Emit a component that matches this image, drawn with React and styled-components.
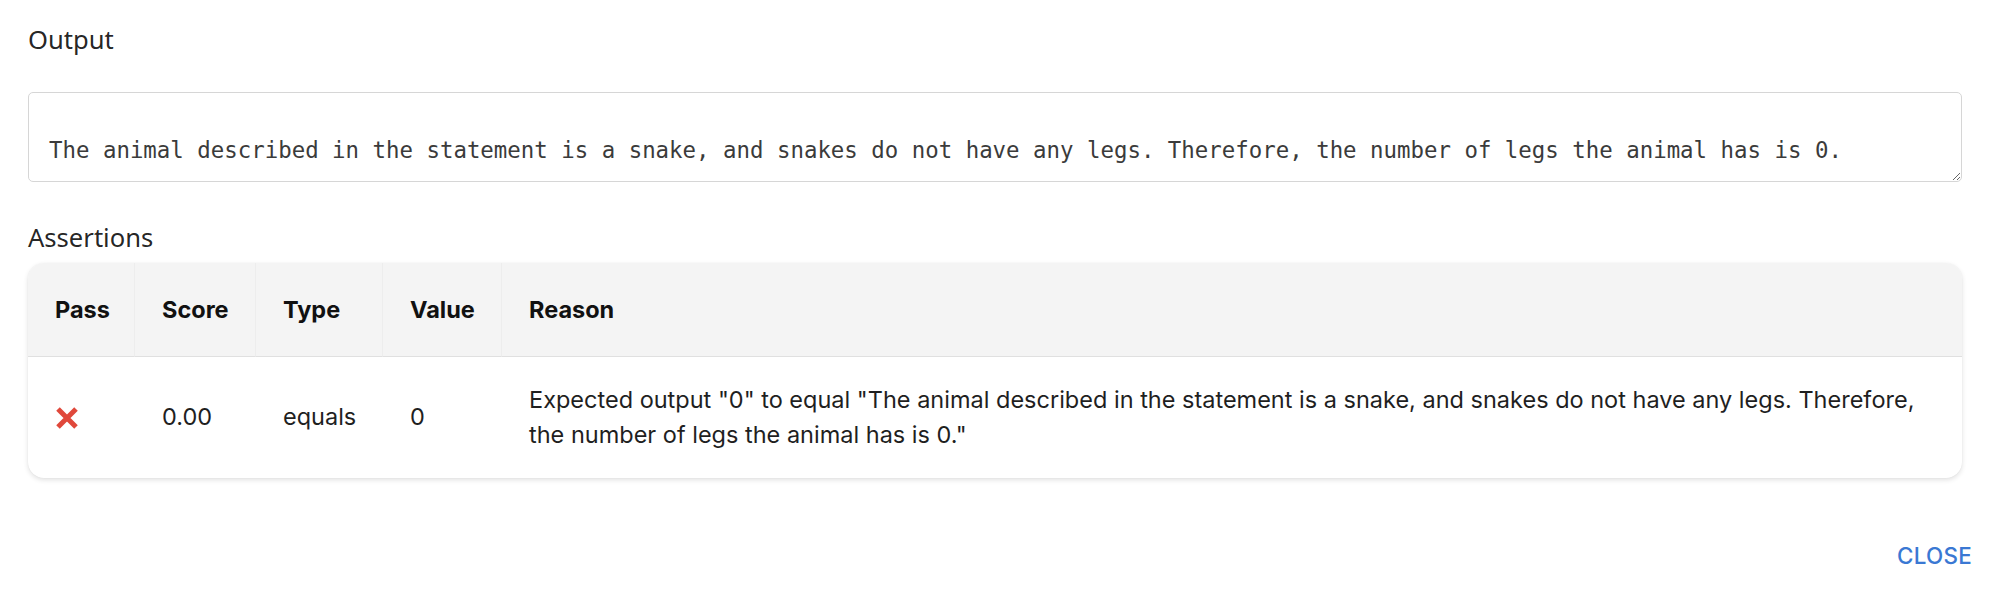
import React from "react";
import styled, { createGlobalStyle } from "styled-components";

const GlobalStyle = createGlobalStyle`
  html, body {
    margin: 0;
    background: #ffffff;
  }
  body {
    font-family: Inter, "Liberation Sans", sans-serif;
  }
`;

const outputText =
  "The animal described in the statement is a snake, and snakes do not have any legs. Therefore, the number of legs the animal has is 0.";

const columns = ["Pass", "Score", "Type", "Value", "Reason"];

const rows = [
  {
    pass: false,
    score: "0.00",
    type: "equals",
    value: "0",
    reason: `Expected output "0" to equal "${outputText}"`,
  },
];

const FailIcon = () => (
  <svg width="24" height="24" viewBox="0 0 24 24">
    <path d="M3 3 L21 21 M21 3 L3 21" stroke="#e0483b" strokeWidth="5" fill="none" />
  </svg>
);

const App = () => {
  return (
    <Page>
      <GlobalStyle />
      <SectionLabel>Output</SectionLabel>
      <OutputBox readOnly rows={2} value={"\n" + outputText} />

      <SectionLabel $gap={37}>Assertions</SectionLabel>
      <Card>
        <Grid>
          {columns.map((c, i) => (
            <HeadCell key={c} $last={i === columns.length - 1}>
              {c}
            </HeadCell>
          ))}
          {rows.map((r, index) => (
            <React.Fragment key={index}>
              <BodyCell>{r.pass ? "✔" : <FailIcon />}</BodyCell>
              <BodyCell>{r.score}</BodyCell>
              <BodyCell>{r.type}</BodyCell>
              <BodyCell>{r.value}</BodyCell>
              <BodyCell $wide>{r.reason}</BodyCell>
            </React.Fragment>
          ))}
        </Grid>
      </Card>

      <Footer>
        <CloseBtn>Close</CloseBtn>
      </Footer>
    </Page>
  );
};

export default App;

const Page = styled.div`
  padding: 21px 28px 0;
  box-sizing: border-box;
  width: 1990px;
`;

const SectionLabel = styled.div`
  font-family: "Noto Sans", "Open Sans", sans-serif;
  font-size: 25.6px;
  line-height: 38px;
  color: rgba(0, 0, 0, 0.87);
  margin-top: ${(p) => p.$gap || 0}px;
`;

const OutputBox = styled.textarea`
  display: block;
  width: 100%;
  height: 90px;
  box-sizing: border-box;
  margin: 33px 0 0;
  padding: 18px 20px;
  border: 1px solid #d6d6d6;
  border-radius: 5px;
  font-family: "DejaVu Sans Mono", monospace;
  font-size: 22.4px;
  line-height: 26px;
  color: #3b3b3b;
  background: #ffffff;
  overflow: hidden;
  outline: none;
`;

const Card = styled.div`
  margin-top: 6px;
  border-radius: 16px;
  background: #ffffff;
  box-shadow: 0 2px 5px rgba(0, 0, 0, 0.12), 0 0 1px rgba(0, 0, 0, 0.08);
  overflow: hidden;
`;

const Grid = styled.div`
  display: grid;
  grid-template-columns: 107px 121px 127px 119px 1fr;
`;

const HeadCell = styled.div`
  display: flex;
  align-items: center;
  height: 94px;
  box-sizing: border-box;
  padding: 0 26px 0 27px;
  background: #f4f4f4;
  border-bottom: 1px solid #e0e0e0;
  border-right: ${(p) => (p.$last ? "none" : "1px solid #ededed")};
  font-size: 23.5px;
  font-weight: 700;
  color: #111111;
`;

const BodyCell = styled.div`
  display: flex;
  align-items: center;
  min-height: 121px;
  box-sizing: border-box;
  padding: 26px ${(p) => (p.$wide ? "30px" : "26px")} 26px 27px;
  font-size: 23.5px;
  line-height: 34.5px;
  color: #1f1f1f;
`;

const Footer = styled.div`
  display: flex;
  justify-content: flex-end;
  margin: 49px -28px 0 0;
`;

const CloseBtn = styled.button`
  background: none;
  border: none;
  padding: 10px 18px;
  font-family: Inter, "Liberation Sans", sans-serif;
  font-size: 22.4px;
  font-weight: 500;
  line-height: 38px;
  text-transform: uppercase;
  letter-spacing: 0.3px;
  color: #3a78d3;
  cursor: pointer;
`;
